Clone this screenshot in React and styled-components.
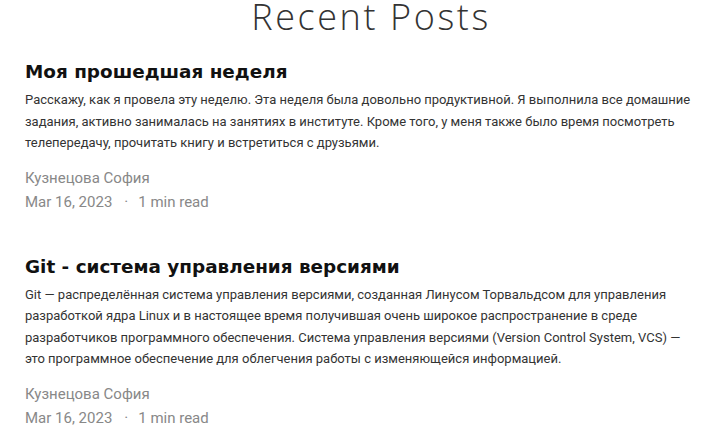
import React from 'react'
import styled, { createGlobalStyle } from 'styled-components'

const GlobalStyle = createGlobalStyle`
  body {
    margin: 0;
    background: #fff;
    font-family: Roboto, "Liberation Sans", sans-serif;
  }
`

const posts = [
  {
    title: 'Моя прошедшая неделя',
    text: 'Расскажу, как я провела эту неделю. Эта неделя была довольно продуктивной. Я выполнила все домашние задания, активно занималась на занятиях в институте. Кроме того, у меня также было время посмотреть телепередачу, прочитать книгу и встретиться с друзьями.',
    author: 'Кузнецова София',
    date: 'Mar 16, 2023',
    read: '1 min read',
  },
  {
    title: 'Git - система управления версиями',
    text: 'Git — распределённая система управления версиями, созданная Линусом Торвальдсом для управления разработкой ядра Linux и в настоящее время получившая очень широкое распространение в среде разработчиков программного обеспечения. Система управления версиями (Version Control System, VCS) — это программное обеспечение для облегчения работы с изменяющейся информацией.',
    author: 'Кузнецова София',
    date: 'Mar 16, 2023',
    read: '1 min read',
  },
]

function App() {
  return (
    <Page>
      <GlobalStyle />
      <Heading>Recent Posts</Heading>
      <List>
        {posts.map((post, i) => (
          <Post key={i}>
            <Title>{post.title}</Title>
            <Excerpt>{post.text}</Excerpt>
            <Meta>
              <span>{post.author}</span>
              <MetaRow>
                <span>{post.date}</span>
                <Dot>·</Dot>
                <span>{post.read}</span>
              </MetaRow>
            </Meta>
          </Post>
        ))}
      </List>
    </Page>
  )
}

export default App

const Page = styled.div`
  padding: 0 25px;
`

const Heading = styled.h1`
  margin: -7px 0 0;
  padding-left: 20px;
  text-align: center;
  font-family: "Open Sans", sans-serif;
  font-weight: 300;
  font-size: 36px;
  letter-spacing: 2.6px;
  line-height: 48px;
  color: #333;
`

const List = styled.div`
  display: flex;
  flex-direction: column;
  gap: 40px;
  margin-top: 18px;
`

const Post = styled.article`
  display: flex;
  flex-direction: column;
`

const Title = styled.h2`
  margin: 0 0 4px;
  font-family: "DejaVu Sans", sans-serif;
  font-weight: 700;
  font-size: 18.4px;
  line-height: 26px;
  color: #111;
`

const Excerpt = styled.p`
  margin: 0;
  font-size: 13px;
  line-height: 21.5px;
  color: #333;
`

const Meta = styled.div`
  margin-top: 12px;
  font-size: 15px;
  line-height: 24px;
  color: #888;
`

const MetaRow = styled.div`
  display: flex;
`

const Dot = styled.span`
  padding: 0 10px 0 12px;
`
